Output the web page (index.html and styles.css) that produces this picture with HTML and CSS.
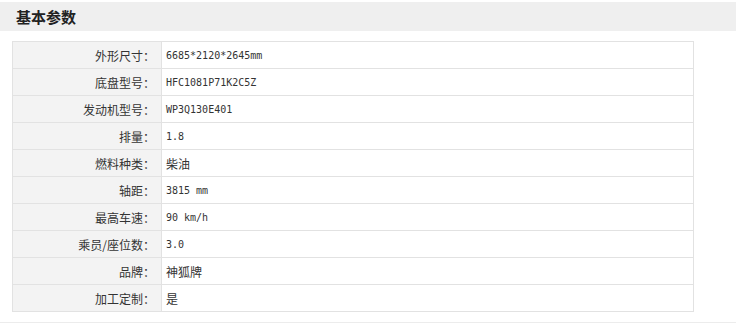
FILE: index.html
```html
<!DOCTYPE html>
<html>
<head>
<meta charset="utf-8">
<link rel="stylesheet" href="styles.css">
</head>
<body>
<div class="section-head"><h2 class="section-title">基本参数</h2></div>
<table class="params">
<tr><td class="label">外形尺寸：</td><td class="value">6685*2120*2645mm</td></tr>
<tr><td class="label">底盘型号：</td><td class="value">HFC1081P71K2C5Z</td></tr>
<tr><td class="label">发动机型号：</td><td class="value">WP3Q130E401</td></tr>
<tr><td class="label">排量：</td><td class="value">1.8</td></tr>
<tr><td class="label">燃料种类：</td><td class="value cjk">柴油</td></tr>
<tr><td class="label">轴距：</td><td class="value">3815 mm</td></tr>
<tr><td class="label">最高车速：</td><td class="value">90 km/h</td></tr>
<tr><td class="label">乘员/座位数：</td><td class="value">3.0</td></tr>
<tr><td class="label">品牌：</td><td class="value cjk">神狐牌</td></tr>
<tr><td class="label">加工定制：</td><td class="value cjk">是</td></tr>
</table>
<div class="next-section"></div>
</body>
</html>
```
FILE: styles.css
```css
html, body {
  margin: 0;
  padding: 0;
  background: #fff;
  color: #333;
  font-family: "Noto Sans CJK SC", "Noto Sans", sans-serif;
}
.section-head {
  margin-top: 2px;
  height: 29px;
  background: #efefef;
  display: flex;
  align-items: center;
  padding-left: 16px;
}
.section-title {
  margin: 0;
  font-size: 15px;
  font-weight: bold;
  color: #222;
  line-height: 1;
}
.params {
  margin: 10px 0 0 12px;
  width: 682px;
  border-collapse: collapse;
  table-layout: fixed;
}
.params td {
  border: 1px solid #e2e2e2;
  height: 27px;
  padding: 0;
  box-sizing: border-box;
  font-size: 12px;
  vertical-align: middle;
}
.label {
  width: 149px;
  background: #f3f3f3;
  text-align: right;
  padding-right: 6px !important;
}
.value {
  padding-left: 4px !important;
  font-family: "DejaVu Sans Mono", "Liberation Mono", monospace;
  font-size: 10px !important;
  color: #333;
}
.value.cjk {
  font-family: "Noto Sans CJK SC", sans-serif;
  font-size: 12px !important;
}
.next-section {
  margin-top: 10px;
  border-top: 1px solid #ececec;
  height: 4px;
}
```
